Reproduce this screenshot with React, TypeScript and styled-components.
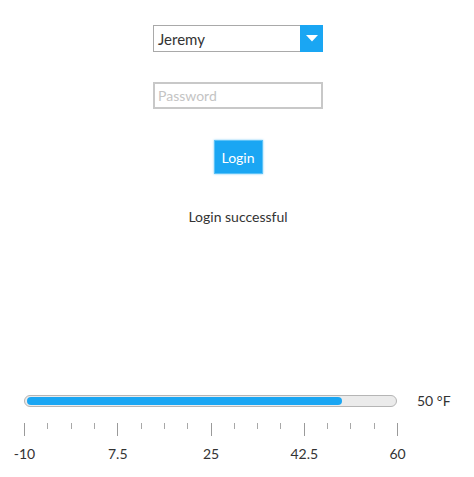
import React from 'react';
import styled, { createGlobalStyle } from 'styled-components';

const GlobalStyle = createGlobalStyle`
  body {
    margin: 0;
    font-family: 'Lato', 'Liberation Sans', sans-serif;
    color: #333333;
    background: #ffffff;
  }
`;

const MIN = -10;
const MAX = 60;
const VALUE = 50;
const LABELS = ['-10', '7.5', '25', '42.5', '60'];

export default function App() {
  const ticks = Array.from({ length: 17 }, (_, i) => i);
  const percent = ((VALUE - MIN) / (MAX - MIN)) * 100;

  return (
    <Page>
      <GlobalStyle />
      <Form>
        <Select>
          <SelectValue>Jeremy</SelectValue>
          <SelectArrow>
            <svg width="12" height="7" viewBox="0 0 12 7">
              <path d="M0 0 L12 0 L6 6.5 Z" fill="#ffffff" />
            </svg>
          </SelectArrow>
        </Select>
        <PasswordInput type="password" placeholder="Password" />
        <LoginButton>Login</LoginButton>
        <Status>Login successful</Status>
      </Form>

      <SliderSection>
        <SliderRow>
          <Track>
            <Fill style={{ width: `${percent}%` }} />
          </Track>
          <ValueLabel>50 °F</ValueLabel>
        </SliderRow>
        <Scale>
          <Ticks>
            {ticks.map(i => (
              <Tick key={i} major={i % 4 === 0} />
            ))}
          </Ticks>
          <Labels>
            {LABELS.map(l => (
              <ScaleLabel key={l}>
                <span>{l}</span>
              </ScaleLabel>
            ))}
          </Labels>
        </Scale>
      </SliderSection>
    </Page>
  );
}

const Page = styled.div`
  width: 474px;
  height: 477px;
  display: flex;
  flex-direction: column;
`;

const Form = styled.div`
  display: flex;
  flex-direction: column;
  align-items: center;
  padding-top: 25px;
  padding-left: 2px;
`;

const Select = styled.div`
  width: 170px;
  height: 27px;
  box-sizing: border-box;
  border: 1px solid #a9a9a9;
  display: flex;
  align-items: stretch;
`;

const SelectValue = styled.div`
  flex: 1;
  display: flex;
  align-items: center;
  padding-left: 4px;
  font-size: 15px;
  color: #333333;
`;

const SelectArrow = styled.div`
  width: 23px;
  margin: -1px -1px -1px 0;
  background: #1aa6f3;
  display: flex;
  align-items: center;
  justify-content: center;
`;

const PasswordInput = styled.input`
  margin-top: 30px;
  width: 170px;
  height: 27px;
  box-sizing: border-box;
  border: 2px solid #c8c8c8;
  padding: 0 0 0 3px;
  font-family: 'Lato', 'Liberation Sans', sans-serif;
  font-size: 14px;
  outline: none;

  &::placeholder {
    color: #c4c4c4;
  }
`;

const LoginButton = styled.button`
  margin-top: 31px;
  width: 49px;
  height: 34px;
  box-sizing: border-box;
  border: 1px solid #5cc2f7;
  box-shadow: 0 0 2px rgba(26, 166, 243, 0.6);
  background: #1aa6f3;
  color: #ffffff;
  font-family: 'Lato', 'Liberation Sans', sans-serif;
  font-size: 14px;
  padding: 0;
  cursor: pointer;
`;

const Status = styled.div`
  margin-top: 34px;
  font-size: 14px;
  line-height: 18px;
  color: #333333;
`;

const SliderSection = styled.div`
  margin-top: 166px;
  padding-left: 24px;
  display: flex;
  flex-direction: column;
`;

const SliderRow = styled.div`
  display: flex;
  align-items: center;
`;

const Track = styled.div`
  width: 373px;
  height: 12px;
  box-sizing: border-box;
  border: 1px solid #b5b5b5;
  border-radius: 6px;
  background: #ebebeb;
  padding: 1px 2px;
  display: flex;
`;

const Fill = styled.div`
  height: 8px;
  border-radius: 4px;
  background: #1aa6f3;
`;

const ValueLabel = styled.div`
  margin-left: 20px;
  font-size: 14px;
  color: #333333;
`;

const Scale = styled.div`
  width: 374px;
  margin-top: 14px;
  display: flex;
  flex-direction: column;
`;

const Ticks = styled.div`
  display: flex;
  justify-content: space-between;
  align-items: flex-start;
  height: 13px;
`;

const Tick = styled.div<{ major: boolean }>`
  width: 1px;
  height: ${p => (p.major ? 13 : 6)}px;
  background: ${p => (p.major ? '#9a9a9a' : '#a8a8a8')};
`;

const Labels = styled.div`
  margin-top: 10px;
  display: flex;
  justify-content: space-between;
`;

const ScaleLabel = styled.div`
  width: 1px;
  display: flex;
  justify-content: center;
  white-space: nowrap;
  font-size: 14px;
  line-height: 16px;
  color: #333333;
`;
